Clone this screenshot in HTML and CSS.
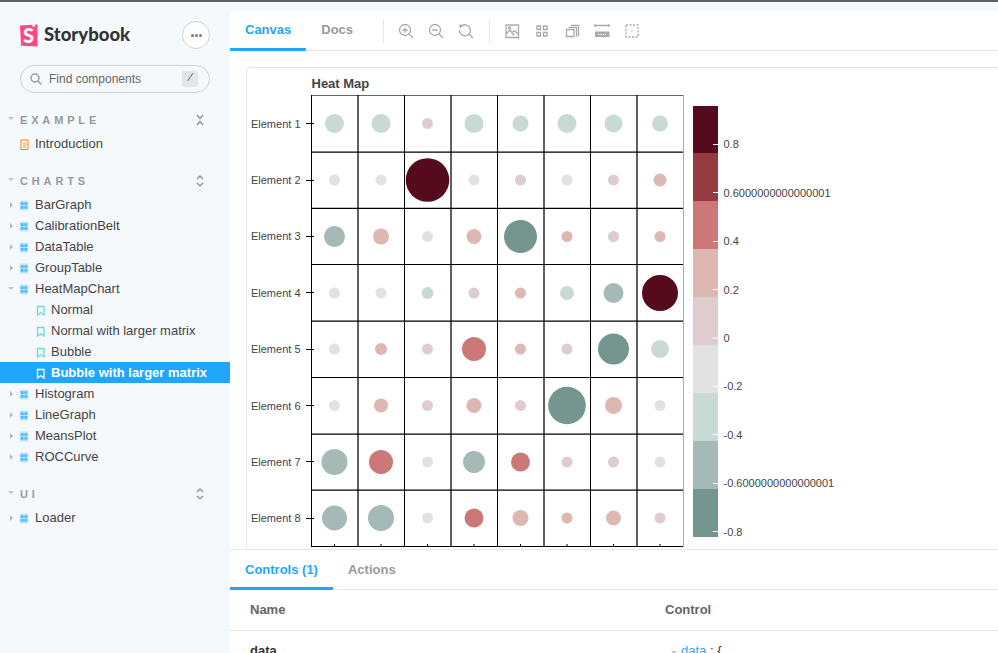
FILE: index.html
```html
<!DOCTYPE html>
<html lang="en">
<head>
<meta charset="utf-8">
<title>Storybook</title>
<link rel="stylesheet" href="styles.css">
</head>
<body>
<svg class="defs" width="0" height="0" aria-hidden="true">
  <symbol id="i-comp" viewBox="0 0 10 11"><path class="comp-bg" d="M.5 2A1.500 1.500 0 0 1 2 .5h6A1.500 1.500 0 0 1 9.500 2v7A1.500 1.500 0 0 1 8 10.500H2A1.500 1.500 0 0 1 .5 9z"/><path class="comp-fg" d="M1.800 2.300h2.800v2.800H1.800zM5.400 2.300h2.800v2.800H5.400zM1.800 5.900h2.800v2.800H1.800zM5.400 5.900h2.800v2.800H5.400z"/></symbol>
  <symbol id="i-book" viewBox="0 0 10 11"><path d="M1.500 1.500h6.500v8.500L4.750 7.800 1.500 10z" fill="none" stroke="currentColor" stroke-width="1.300"/></symbol>
</svg>
<div class="app">
  <aside class="sidebar">
    <div class="brand">
      <div class="logo">
        <svg class="logo-mark" width="18" height="23" viewBox="0 0 18 23"><path class="logo-pink" d="M0 1.500 12.500 .8l-.2 2.400 1.300-.9 1.200.9-.1-2.500L17.500 .5v22L1 21.800z"/><text class="logo-s" x="8.500" y="18.500" text-anchor="middle">S</text></svg>
        <span class="logo-text">Storybook</span>
      </div>
      <button class="menu-btn" type="button" aria-label="menu"><i></i><i></i><i></i></button>
    </div>
    <div class="search">
      <svg width="12" height="12" viewBox="0 0 12 12" class="search-icon"><circle cx="5" cy="5" r="4" /><path d="M8 8l3.500 3.500"/></svg>
      <span class="search-text">Find components</span>
      <kbd class="slash">/</kbd>
    </div>

    <section class="group">
      <h2 class="group-head"><span class="caret-down"></span><span class="group-name">EXAMPLE</span>
        <svg class="expander" width="8" height="12" viewBox="0 0 8 12"><path d="M1 1l3 3.500L7 1M1 11l3-3.500L7 11"/></svg></h2>
      <div class="row"><svg class="ic doc" width="10" height="11" viewBox="0 0 10 11"><path d="M1 1h7v9.500H1z"/><path d="M3 4h3.500M3 6h3.500M3 8h2.500"/></svg><span>Introduction</span></div>
    </section>

    <section class="group">
      <h2 class="group-head"><span class="caret-down"></span><span class="group-name">CHARTS</span>
        <svg class="expander" width="8" height="12" viewBox="0 0 8 12"><path d="M1 4l3-3 3 3M1 8l3 3 3-3"/></svg></h2>
      <div class="row"><span class="caret-right"></span><svg class="ic"><use href="#i-comp"/></svg><span>BarGraph</span></div>
      <div class="row"><span class="caret-right"></span><svg class="ic"><use href="#i-comp"/></svg><span>CalibrationBelt</span></div>
      <div class="row"><span class="caret-right"></span><svg class="ic"><use href="#i-comp"/></svg><span>DataTable</span></div>
      <div class="row"><span class="caret-right"></span><svg class="ic"><use href="#i-comp"/></svg><span>GroupTable</span></div>
      <div class="row"><span class="caret-open"></span><svg class="ic"><use href="#i-comp"/></svg><span>HeatMapChart</span></div>
      <div class="row story"><svg class="ic book"><use href="#i-book"/></svg><span>Normal</span></div>
      <div class="row story"><svg class="ic book"><use href="#i-book"/></svg><span>Normal with larger matrix</span></div>
      <div class="row story"><svg class="ic book"><use href="#i-book"/></svg><span>Bubble</span></div>
      <div class="row story selected"><svg class="ic book"><use href="#i-book"/></svg><span>Bubble with larger matrix</span></div>
      <div class="row"><span class="caret-right"></span><svg class="ic"><use href="#i-comp"/></svg><span>Histogram</span></div>
      <div class="row"><span class="caret-right"></span><svg class="ic"><use href="#i-comp"/></svg><span>LineGraph</span></div>
      <div class="row"><span class="caret-right"></span><svg class="ic"><use href="#i-comp"/></svg><span>MeansPlot</span></div>
      <div class="row"><span class="caret-right"></span><svg class="ic"><use href="#i-comp"/></svg><span>ROCCurve</span></div>
    </section>

    <section class="group">
      <h2 class="group-head"><span class="caret-down"></span><span class="group-name">UI</span>
        <svg class="expander" width="8" height="12" viewBox="0 0 8 12"><path d="M1 4l3-3 3 3M1 8l3 3 3-3"/></svg></h2>
      <div class="row"><span class="caret-right"></span><svg class="ic"><use href="#i-comp"/></svg><span>Loader</span></div>
    </section>
  </aside>

  <main class="main">
    <div class="toolbar">
      <a class="tab active">Canvas</a>
      <a class="tab">Docs</a>
      <span class="sep first"></span>
      <svg class="tool" width="16" height="16" viewBox="0 0 16 16"><circle cx="7" cy="7" r="5.500"/><path d="M11 11l4 4M7 4.300v5.400M4.300 7h5.400"/></svg>
      <svg class="tool" width="16" height="16" viewBox="0 0 16 16"><circle cx="7" cy="7" r="5.500"/><path d="M11 11l4 4M4.300 7h5.400"/></svg>
      <svg class="tool" width="16" height="16" viewBox="0 0 16 16"><path d="M3 3.500A5.500 5.500 0 1 1 1.500 7M11 11l4 4"/><path class="tool-fill" d="M1 1.500l4 .5-3 3.500z"/></svg>
      <span class="sep"></span>
      <svg class="tool" width="16" height="16" viewBox="0 0 16 16"><path d="M2 2h12.500v12.500H2zM2 11l4-4 4 5.500M8 9.500l2.500-2 4 4"/><circle cx="5.500" cy="5" r="1"/></svg>
      <svg class="tool" width="16" height="16" viewBox="0 0 16 16"><path d="M3 3h3.500v3.500H3zM9.500 3H13v3.500H9.500zM3 9.500h3.500V13H3zM9.500 9.500H13V13H9.500z"/></svg>
      <svg class="tool" width="16" height="16" viewBox="0 0 16 16"><path d="M2.500 6.500h7.500v7H2.500zM4.500 4.300h8v9.200M7 2.300h7.500v11.200"/></svg>
      <svg class="tool" width="16" height="16" viewBox="0 0 16 16"><path d="M1 2.500h14M1 1v3M15 1v3"/><path class="tool-fill" d="M1 8.500h14.500V14H1z"/><path class="tool-notch" d="M4 11.500h8"/></svg>
      <svg class="tool dashed" width="16" height="16" viewBox="0 0 16 16"><path d="M2 2h12v12H2z"/><circle class="tool-fill" cx="8" cy="8" r=".8"/></svg>
    </div>

    <div class="canvas">
      <div class="frame">
        <svg class="plot" width="760" height="490" viewBox="247 68 760 490">
          <text class="plot-title" x="311.500" y="88">Heat Map</text>
          <g class="grid">
            <path class="grid-top" d="M311 95.500H684"/>
            <path d="M311 264.500H684M311 377.500H684M311 546.500H684M311.500 95V547M404.500 95V547M497.500 95V547M590.500 95V547"/>
            <path class="grid-soft" d="M311 152H684M311 208.400H684M311 321H684M311 434H684M311 490H684M358 95V547M451 95V547M544 95V547M637 95V547"/>
            <path class="grid-end" d="M683.500 95V547"/>
            <path d="M306 123.500h8M306 180.500h8M306 236.500h8M306 292.500h8M306 349.500h8M306 405.500h8M306 461.500h8M306 518.500h8"/>
            <path d="M334.500 544v3M381 544v3M427.500 544v3M474 544v3M520.500 544v3M567 544v3M613.500 544v3M660 544v3"/>
          </g>
          <g class="tick-labels">
            <text x="300.500" y="128" text-anchor="end">Element 1</text>
            <text x="300.500" y="184" text-anchor="end">Element 2</text>
            <text x="300.500" y="240" text-anchor="end">Element 3</text>
            <text x="300.500" y="297" text-anchor="end">Element 4</text>
            <text x="300.500" y="353" text-anchor="end">Element 5</text>
            <text x="300.500" y="410" text-anchor="end">Element 6</text>
            <text x="300.500" y="466" text-anchor="end">Element 7</text>
            <text x="300.500" y="522" text-anchor="end">Element 8</text>
          </g>
          <g>
            <circle class="c3" cx="334.500" cy="123.500" r="9.500"/><circle class="c3" cx="381" cy="123.500" r="9.500"/><circle class="c5" cx="427.500" cy="123.500" r="5.500"/><circle class="c3" cx="474" cy="123.500" r="9.500"/><circle class="c3" cx="520.500" cy="123.500" r="8"/><circle class="c3" cx="567" cy="123.500" r="9.500"/><circle class="c3" cx="613.500" cy="123.500" r="9"/><circle class="c3" cx="660" cy="123.500" r="8"/>
            <circle class="c4" cx="334.500" cy="180" r="5.500"/><circle class="c4" cx="381" cy="180" r="5.500"/><circle class="c9" cx="427.500" cy="180" r="21.800"/><circle class="c4" cx="474" cy="180" r="5.500"/><circle class="c5" cx="520.500" cy="180" r="5.500"/><circle class="c4" cx="567" cy="180" r="5.500"/><circle class="c5" cx="613.500" cy="180" r="5.500"/><circle class="c6" cx="660" cy="180" r="6.500"/>
            <circle class="c2" cx="334.500" cy="236.500" r="10.500"/><circle class="c6" cx="381" cy="236.500" r="8"/><circle class="c4" cx="427.500" cy="236.500" r="5.500"/><circle class="c6" cx="474" cy="236.500" r="7.500"/><circle class="c1" cx="520.500" cy="236.500" r="16.500"/><circle class="c6" cx="567" cy="236.500" r="5.500"/><circle class="c5" cx="613.500" cy="236.500" r="5.500"/><circle class="c6" cx="660" cy="236.500" r="5.500"/>
            <circle class="c4" cx="334.500" cy="293" r="5.500"/><circle class="c4" cx="381" cy="293" r="5.500"/><circle class="c3" cx="427.500" cy="293" r="6"/><circle class="c5" cx="474" cy="293" r="5.500"/><circle class="c6" cx="520.500" cy="293" r="5.500"/><circle class="c3" cx="567" cy="293" r="7"/><circle class="c2" cx="613.500" cy="293" r="10"/><circle class="c9" cx="660" cy="293" r="18"/>
            <circle class="c4" cx="334.500" cy="349" r="5.500"/><circle class="c6" cx="381" cy="349" r="6"/><circle class="c5" cx="427.500" cy="349" r="5.500"/><circle class="c7" cx="474" cy="349" r="12"/><circle class="c6" cx="520.500" cy="349" r="5.500"/><circle class="c5" cx="567" cy="349" r="5.500"/><circle class="c1" cx="613.500" cy="349" r="15.500"/><circle class="c3" cx="660" cy="349" r="9"/>
            <circle class="c4" cx="334.500" cy="405.500" r="5.500"/><circle class="c6" cx="381" cy="405.500" r="7"/><circle class="c5" cx="427.500" cy="405.500" r="5.500"/><circle class="c6" cx="474" cy="405.500" r="7.500"/><circle class="c5" cx="520.500" cy="405.500" r="5.500"/><circle class="c1" cx="567" cy="405.500" r="18.800"/><circle class="c6" cx="613.500" cy="405.500" r="8.500"/><circle class="c4" cx="660" cy="405.500" r="5.500"/>
            <circle class="c2" cx="334.500" cy="462" r="13"/><circle class="c7" cx="381" cy="462" r="12"/><circle class="c4" cx="427.500" cy="462" r="5.500"/><circle class="c2" cx="474" cy="462" r="11"/><circle class="c7" cx="520.500" cy="462" r="9.500"/><circle class="c5" cx="567" cy="462" r="5.500"/><circle class="c5" cx="613.500" cy="462" r="5.500"/><circle class="c4" cx="660" cy="462" r="5.500"/>
            <circle class="c2" cx="334.500" cy="518" r="12.500"/><circle class="c2" cx="381" cy="518" r="13"/><circle class="c4" cx="427.500" cy="518" r="5.500"/><circle class="c7" cx="474" cy="518" r="9.500"/><circle class="c6" cx="520.500" cy="518" r="8"/><circle class="c6" cx="567" cy="518" r="5.500"/><circle class="c6" cx="613.500" cy="518" r="7.500"/><circle class="c5" cx="660" cy="518" r="5.500"/>
          </g>
          <g>
            <rect class="c9" x="693" y="106" width="25" height="47"/>
            <rect class="c8" x="693" y="153" width="25" height="48"/>
            <rect class="c7" x="693" y="201" width="25" height="48"/>
            <rect class="c6" x="693" y="249" width="25" height="48"/>
            <rect class="c5" x="693" y="297" width="25" height="48"/>
            <rect class="c4" x="693" y="345" width="25" height="48"/>
            <rect class="c3" x="693" y="393" width="25" height="48"/>
            <rect class="c2" x="693" y="441" width="25" height="48"/>
            <rect class="c1" x="693" y="489" width="25" height="48"/>
          </g>
          <path class="legend-ticks" d="M713 144.500h5M713 192.500h5M713 241.500h5M713 289.500h5M713 338h5M713 386.500h5M713 434.500h5M713 483.500h5M713 531.500h5"/>
          <g class="tick-labels">
            <text x="723.500" y="148">0.8</text>
            <text x="723.500" y="197">0.6000000000000001</text>
            <text x="723.500" y="245">0.4</text>
            <text x="723.500" y="294">0.2</text>
            <text x="723.500" y="342">0</text>
            <text x="723.500" y="390">-0.2</text>
            <text x="723.500" y="439">-0.4</text>
            <text x="723.500" y="487">-0.6000000000000001</text>
            <text x="723.500" y="536">-0.8</text>
          </g>
        </svg>
      </div>
    </div>

    <div class="addons">
      <div class="addon-tabs">
        <a class="tab active">Controls (1)</a>
        <a class="tab">Actions</a>
      </div>
      <div class="table-head"><span class="col-name">Name</span><span>Control</span></div>
      <div class="table-row"><span class="col-name">data</span><span class="json"><span class="caret-open small"></span><span class="json-key">data</span> : {</span></div>
    </div>
  </main>
</div>
</body>
</html>
```
FILE: styles.css
```css
* { box-sizing: border-box; }
html, body { margin: 0; height: 100%; overflow: hidden; }
body { font-family: "Liberation Sans", Arial, sans-serif; color: #333; background: #f6f9fc; }
.defs { position: absolute; }
.app { display: flex; height: 653px; border-top: 2px solid #5f6061; }

/* sidebar */
.sidebar { width: 230px; flex: none; padding-top: 19px; background: #f6f9fc; }
.brand { display: flex; align-items: center; justify-content: space-between; height: 28px; margin: 0 20px; }
.logo { display: flex; align-items: center; gap: 6px; }
.logo-mark { display: block; }
.logo-pink { fill: #ff4785; }
.logo-s { fill: #fff; font: 900 20px "Lato", sans-serif; }
.logo-text { font: 900 18.500px/22px "Lato", sans-serif; color: #333; margin-top: -2px; }
.menu-btn { width: 28px; height: 28px; border: 1px solid #cfd3d6; border-radius: 50%; background: #fff; display: flex; align-items: center; justify-content: center; gap: 1px; padding: 0; }
.menu-btn i { width: 3px; height: 3px; border-radius: 50%; background: #777; }
.search { display: flex; align-items: center; height: 28px; margin: 16px 20px 0; padding: 0 11px 0 9px; border: 1px solid #cfd4d8; border-radius: 14px; }
.search-icon { fill: none; stroke: #999; stroke-width: 1.400; flex: none; }
.search-text { flex: 1; margin-left: 7px; font-size: 12px; color: #666; }
.slash { width: 16px; height: 16px; border-radius: 2px; background: #e3e6e8; font: 10px/16px "Liberation Mono", monospace; text-align: center; color: #555; font-style: italic; }
.group { margin-bottom: 17px; }
.group:first-of-type { margin-top: 17px; }
.group-head { position: relative; display: flex; align-items: center; height: 20px; margin: 0 0 3px; padding-left: 20px; font-size: 11px; font-weight: 700; color: #999; letter-spacing: .35em; }
.group-name { flex: 1; }
.expander { margin-right: 26px; fill: none; stroke: #888; stroke-width: 1.200; }
.caret-down { position: absolute; left: 8px; top: 7px; border: 3.500px solid transparent; border-top-color: #c2c5c8; border-bottom-width: 0; }
.row { display: flex; align-items: center; height: 21px; padding-left: 20px; position: relative; font-size: 13px; color: #444; }
.row .ic { width: 10px; height: 11px; flex: none; margin: 2px 5px 0 -1px; }
.row .ic.doc { margin-left: 0; fill: #fff6ec; stroke: #ff8300; stroke-width: 1; }
.row .ic.doc path + path { stroke-width: .8; }
.row .ic.book { color: #62dedc; margin-left: 0; margin-right: 5px; }
.row > .ic:not(.doc):not(.book) { margin-left: -1px; margin-right: 6px; }
.comp-bg { fill: #bfe5ff; }
.comp-fg { fill: #4db8fd; }
.caret-right { position: absolute; left: 10px; top: 8px; border: 3px solid transparent; border-left-color: #b5b9bc; border-right-width: 0; }
.caret-open { position: absolute; left: 8px; top: 9px; border: 3.500px solid transparent; border-top-color: #c2c5c8; border-bottom-width: 0; }
.story { padding-left: 36px; }
.selected { background: #1ea7fd; color: #fff; font-weight: 700; }
.selected .ic.book { color: #fff; }

/* main */
.main { flex: 1; min-width: 0; display: flex; flex-direction: column; margin-top: 9px; background: #fff; border-top-left-radius: 4px; }
.toolbar { display: flex; align-items: center; height: 40px; flex: none; border-bottom: 1px solid #e6e8ea; }
.tab { display: flex; align-items: center; height: 40px; padding: 0 15px; font-size: 13px; font-weight: 700; color: #999; border-bottom: 3px solid transparent; margin-bottom: -1px; }
.tab.active { color: #1ea7fd; border-bottom-color: #1ea7fd; }
.sep { width: 1px; height: 24px; margin: 0 14px 0 1px; background: #e3e6e8; flex: none; }
.sep.first { margin-left: 15px; }
.tool { flex: none; margin-right: 14px; fill: none; stroke: #aaa; stroke-width: 1.300; }
.tool-fill { fill: #aaa; stroke: none; }
.tool-notch { stroke: #fff; stroke-width: 1; stroke-dasharray: 1.500 1; }
.dashed path { stroke-dasharray: 2 1.500; }

.canvas { flex: 1; min-height: 0; overflow: hidden; padding: 16px 0 0 16px; }
.frame { width: 800px; height: 520px; border: 1px solid #e5e5e5; border-top-left-radius: 4px; background: #fff; }
.plot { display: block; }
.plot-title { font: 700 13px "Liberation Sans", sans-serif; fill: #444; }
.grid { fill: none; stroke: #000; stroke-width: 1; }
.grid-top { stroke: #666; }
.grid-soft { stroke-width: 1.250; }
.grid-end { stroke: #aaa; }
.tick-labels text { font: 11px "Liberation Sans", sans-serif; fill: #444; }
.legend-ticks { stroke: #fff; fill: none; }
.c1 { fill: #75968f; }
.c2 { fill: #a5bab7; }
.c3 { fill: #c9d9d3; }
.c4 { fill: #e2e2e2; }
.c5 { fill: #dfccce; }
.c6 { fill: #ddb7b1; }
.c7 { fill: #cc7878; }
.c8 { fill: #933b41; }
.c9 { fill: #550b1d; }

/* addons */
.addons { flex: none; height: 104px; overflow: hidden; border-top: 1px solid #e6e8ea; background: #fff; }
.addon-tabs { display: flex; height: 40px; padding-top: 1px; border-bottom: 1px solid #e6e8ea; }
.addon-tabs .tab { height: 39px; }
.table-head, .table-row { display: flex; padding-left: 20px; font-size: 13px; font-weight: 700; }
.table-head { align-items: center; height: 41px; padding-bottom: 2px; border-bottom: 1px solid #e6e8ea; color: #666; }
.table-row { padding-top: 12px; color: #333; }
.col-name { width: 415px; flex: none; }
.json { position: relative; padding-left: 16px; font-weight: 400; font-family: "Liberation Sans", sans-serif; }
.json-key { color: #1ea7fd; }
.caret-open.small { left: 6px; top: 8px; }
```
